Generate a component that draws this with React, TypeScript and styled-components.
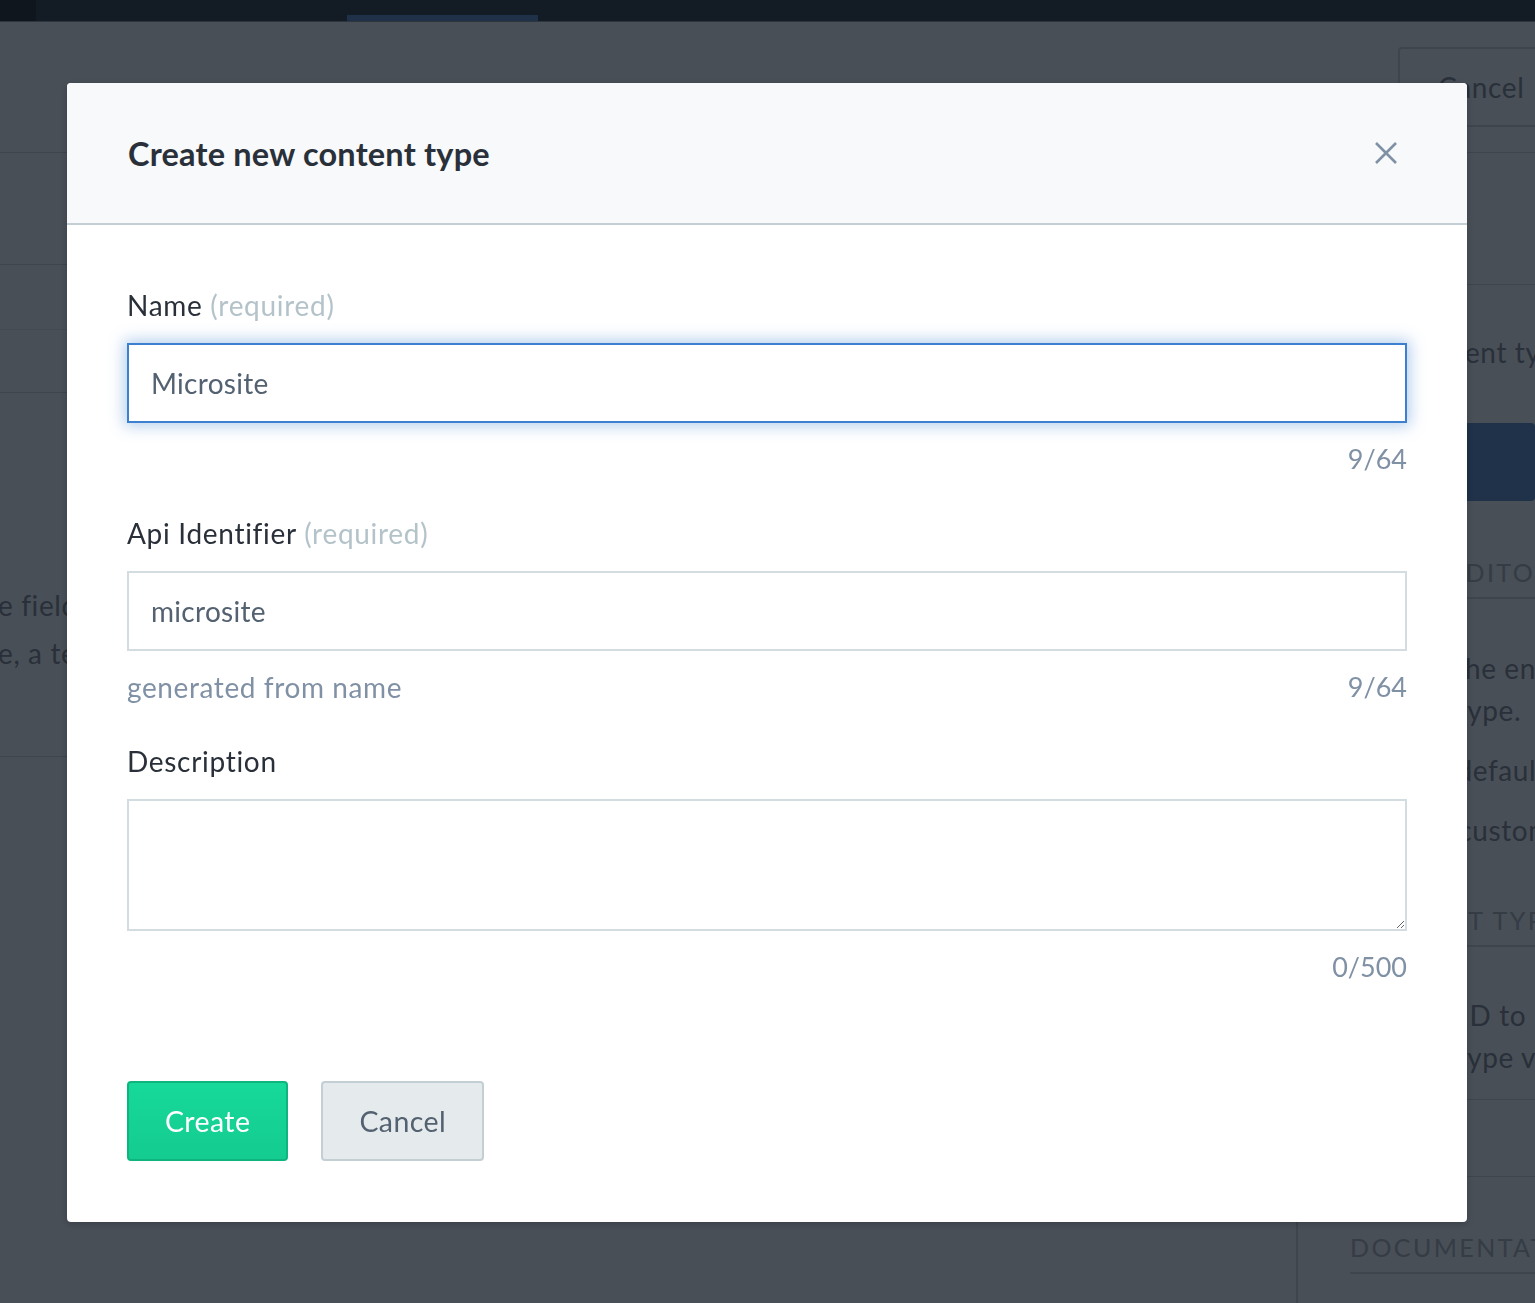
import * as React from "react";
import styled, { createGlobalStyle } from "styled-components";

const GlobalStyle = createGlobalStyle`
  html, body {
    margin: 0;
    padding: 0;
    height: 100%;
    background: #484f57;
    font-family: Lato, "Open Sans", "Liberation Sans", sans-serif;
    overflow: hidden;
  }
  * {
    box-sizing: border-box;
  }
`;

// background app (already dimmed by the backdrop colours)

const Page = styled.div`
  display: flex;
  flex-direction: column;
  min-height: 1303px;
  background: #484f57;
`;

const TopNav = styled.div`
  display: flex;
  height: 22px;
  background: #131b25;
  border-bottom: 1px solid #2e353d;
`;

const NavLogo = styled.div`
  width: 36px;
  background: #0f161e;
`;

const NavTab = styled.div<{ $active?: boolean; $width: number }>`
  width: ${(p) => p.$width}px;
  border-bottom: 6px solid ${(p) => (p.$active ? "#1f3148" : "transparent")};
`;

const WorkbenchHeader = styled.div`
  display: flex;
  justify-content: flex-end;
  align-items: flex-start;
  height: 131px;
  padding-top: 25px;
  border-bottom: 1px solid #3e454d;
`;

const GhostButton = styled.div`
  width: 160px;
  height: 80px;
  margin-right: -23px;
  display: flex;
  align-items: center;
  padding-left: 38px;
  border: 2px solid #3e454d;
  border-radius: 4px;
  font-size: 28px;
  letter-spacing: 0.6px;
  color: #2a3039;
`;

const Workbench = styled.div`
  display: flex;
  flex: 1;
`;

const MainColumn = styled.div`
  flex: 1;
  display: flex;
  flex-direction: column;
`;

const MainBlock = styled.div<{ $height: number; $faint?: boolean }>`
  height: ${(p) => p.$height}px;
  border-bottom: 1px solid ${(p) => (p.$faint ? "#434a52" : "#3e454d")};
`;

const MainText = styled.div`
  padding-top: 188px;
  font-size: 28px;
  line-height: 48px;
  letter-spacing: 0.6px;
  color: #2a3039;
  white-space: nowrap;
  margin-left: -2px;
`;

const Sidebar = styled.div`
  width: 239px;
  border-left: 2px solid #3e454d;
  display: flex;
  flex-direction: column;
  overflow: hidden;
`;

const SideBlock = styled.div<{ $height?: number; $line?: boolean }>`
  ${(p) => (p.$height ? `height: ${p.$height}px;` : "")}
  margin-left: ${(p) => (p.$line ? "-52px" : "0")};
  padding-left: 52px;
  ${(p) => (p.$line ? "border-bottom: 1px solid #3e454d;" : "")}
`;

const SideText = styled.div<{ $top?: number }>`
  padding-left: 52px;
  margin-top: ${(p) => p.$top ?? 0}px;
  font-size: 28px;
  line-height: 42px;
  letter-spacing: 0.6px;
  color: #2a3039;
  white-space: nowrap;
`;

const SideHeading = styled.div<{ $top: number }>`
  margin: ${(p) => p.$top}px 0 0 52px;
  padding-bottom: 10px;
  font-size: 25px;
  letter-spacing: 2.4px;
  text-transform: uppercase;
  color: #353c44;
  white-space: nowrap;
  border-bottom: 2px solid #3e454d;
`;

const SideButton = styled.div`
  height: 78px;
  margin: 50px 0 0 52px;
  background: #1f3249;
  border-radius: 4px;
`;

const SideField = styled.div`
  height: 78px;
  margin: 21px 0 0 0;
  border-top: 1px solid #3e454d;
  border-bottom: 1px solid #3e454d;
`;

// modal

const Backdrop = styled.div`
  position: fixed;
  inset: 0;
  display: flex;
  justify-content: center;
  align-items: flex-start;
  padding: 83px 1px 0 0;
`;

const Modal = styled.div`
  width: 1400px;
  background: #ffffff;
  border-radius: 4px;
  box-shadow: 0 2px 6px rgba(0, 0, 0, 0.2);
  overflow: hidden;
`;

const ModalHeader = styled.div`
  display: flex;
  align-items: center;
  justify-content: space-between;
  height: 142px;
  padding: 0 60px 0 61px;
  background: #f7f9fa;
  border-bottom: 2px solid #c3cfd5;
`;

const ModalTitle = styled.h1`
  margin: 0;
  font-size: 32.5px;
  font-weight: 700;
  color: #2a3039;
  letter-spacing: 0.2px;
`;

const CloseButton = styled.button`
  display: flex;
  align-items: center;
  justify-content: center;
  width: 40px;
  height: 40px;
  margin-right: 1px;
  padding: 0;
  border: none;
  background: transparent;
  cursor: pointer;
`;

const ModalBody = styled.div`
  display: flex;
  flex-direction: column;
  padding: 62px 60px 61px;
`;

const Field = styled.div`
  display: flex;
  flex-direction: column;
  & + & {
    margin-top: 38px;
  }
`;

const Label = styled.label`
  font-size: 28px;
  line-height: 36px;
  letter-spacing: 0.7px;
  color: #2a3039;
  margin-bottom: 20px;
`;

const Hint = styled.span`
  color: #b4c3ca;
`;

const TextInput = styled.input<{ $focused?: boolean }>`
  height: 80px;
  padding: 0 22px;
  font-family: inherit;
  font-size: 28px;
  letter-spacing: 0.3px;
  color: #536171;
  border: 2px solid ${(p) => (p.$focused ? "#3c80cf" : "#d3dce0")};
  border-radius: 0;
  outline: none;
  box-shadow: ${(p) => (p.$focused ? "0 0 14px 3px rgba(60, 128, 207, 0.38)" : "none")};
`;

const TextArea = styled.textarea`
  height: 132px;
  padding: 18px 22px;
  font-family: inherit;
  font-size: 28px;
  color: #536171;
  border: 2px solid #d3dce0;
  border-radius: 0;
  outline: none;
`;

const HelpRow = styled.div`
  display: flex;
  justify-content: space-between;
  align-items: center;
  height: 36px;
  margin-top: 18px;
  font-size: 28px;
  line-height: 36px;
  letter-spacing: 0.6px;
  color: #8091a5;
`;

const Counter = styled.span`
  font-size: 27px;
  letter-spacing: 0;
`;

const Footer = styled.div`
  display: flex;
  gap: 33px;
  margin-top: 96px;
`;

const Button = styled.button<{ $primary?: boolean }>`
  height: 80px;
  padding: 0 36px;
  font-family: inherit;
  font-size: 28.5px;
  letter-spacing: 0.4px;
  border-radius: 4px;
  cursor: pointer;
  color: ${(p) => (p.$primary ? "#ffffff" : "#536171")};
  background: ${(p) =>
    p.$primary ? "linear-gradient(#16d99a, #14cc8f)" : "#e5ebed"};
  border: 2px solid ${(p) => (p.$primary ? "#0fb57f" : "#c3cfd5")};
`;

const CloseIcon = () => (
  <svg width="24" height="24" viewBox="0 0 24 24">
    <path
      d="M2 2 L22 22 M22 2 L2 22"
      stroke="#8091a5"
      strokeWidth="2.6"
      fill="none"
    />
  </svg>
);

export default function App() {
  return (
    <>
      <GlobalStyle />
      <Page>
        <TopNav>
          <NavLogo />
          <NavTab $width={311} />
          <NavTab $width={191} $active />
        </TopNav>
        <WorkbenchHeader>
          <GhostButton>Cancel</GhostButton>
        </WorkbenchHeader>
        <Workbench>
          <MainColumn>
            <MainBlock $height={112} />
            <MainBlock $height={65} $faint />
            <MainBlock $height={63} />
            <MainBlock $height={364}>
              <MainText>
                e fields of this content type
                <br />
                e, a text field
              </MainText>
            </MainBlock>
          </MainColumn>
          <Sidebar>
            <SideBlock $height={132} $line />
            <SideText $top={46}>Edit content type</SideText>
            <SideButton />
            <SideHeading $top={56}>Entry editor</SideHeading>
            <SideText $top={48}>
              Change the entry
              <br />
              content type.
            </SideText>
            <SideText $top={18}>Use the default</SideText>
            <SideText $top={18}>Select a custom</SideText>
            <SideHeading $top={54}>Content type ID</SideHeading>
            <SideText $top={47}>
              Use this ID to refer
              <br />
              content type via
            </SideText>
            <SideField />
            <SideHeading $top={55}>Documentation</SideHeading>
          </Sidebar>
        </Workbench>
      </Page>

      <Backdrop>
        <Modal>
          <ModalHeader>
            <ModalTitle>Create new content type</ModalTitle>
            <CloseButton aria-label="Close">
              <CloseIcon />
            </CloseButton>
          </ModalHeader>
          <ModalBody>
            <Field>
              <Label>
                Name <Hint>(required)</Hint>
              </Label>
              <TextInput $focused defaultValue="Microsite" />
              <HelpRow>
                <span />
                <Counter>9/64</Counter>
              </HelpRow>
            </Field>
            <Field>
              <Label>
                Api Identifier <Hint>(required)</Hint>
              </Label>
              <TextInput defaultValue="microsite" />
              <HelpRow>
                <span>generated from name</span>
                <Counter>9/64</Counter>
              </HelpRow>
            </Field>
            <Field>
              <Label>Description</Label>
              <TextArea />
              <HelpRow>
                <span />
                <Counter>0/500</Counter>
              </HelpRow>
            </Field>
            <Footer>
              <Button $primary>Create</Button>
              <Button>Cancel</Button>
            </Footer>
          </ModalBody>
        </Modal>
      </Backdrop>
    </>
  );
}
